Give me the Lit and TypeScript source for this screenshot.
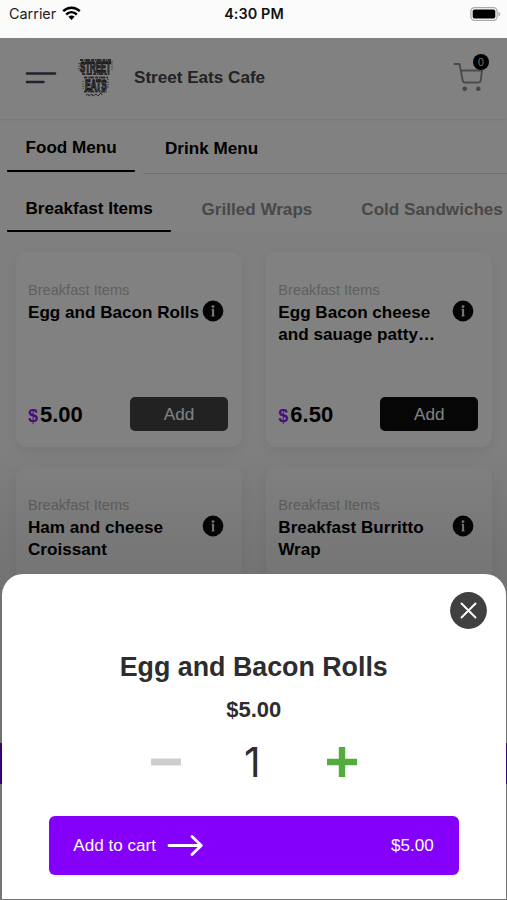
import { LitElement, html, css } from "lit";
import { customElement, property } from "lit/decorators.js";

interface MenuItem {
  title: string;
  price: string;
  active?: boolean;
}

const ITEMS: MenuItem[] = [
  { title: "Egg and Bacon Rolls", price: "5.00", active: true },
  { title: "Egg Bacon cheese and sauage patty…", price: "6.50" },
  { title: "Ham and cheese Croissant", price: "7.00" },
  { title: "Breakfast Burritto Wrap", price: "8.00" },
];

@customElement("menu-card")
export class MenuCard extends LitElement {
  @property({ attribute: false }) item!: MenuItem;

  static styles = css`
    :host {
      display: flex;
      flex-direction: column;
      box-sizing: border-box;
      height: 195px;
      padding: 28px 14px 16px 12px;
      border-radius: 10px;
      background: #fff;
      box-shadow: 0 4px 14px rgba(0, 0, 0, 0.07);
    }
    .category {
      font-size: 14.6px;
      line-height: 20px;
      color: #bdbdbd;
    }
    .row {
      display: flex;
      justify-content: space-between;
      padding-right: 4px;
    }
    .title {
      width: 173px;
      margin-right: -2px;
      font-size: 17.1px;
      line-height: 22px;
      font-weight: 700;
      flex: none;
      padding-top: 2px;
    }
    .info {
      flex: none;
      width: 22px;
      height: 22px;
    }
    .foot {
      display: flex;
      align-items: center;
      justify-content: space-between;
      margin-top: auto;
    }
    .price {
      font-size: 22px;
      font-weight: 700;
      line-height: 30px;
      padding-top: 2px;
    }
    .currency {
      font-size: 18px;
      color: #8a1cf0;
      margin-right: 2px;
    }
    .add {
      width: 98px;
      height: 34px;
      border-radius: 5px;
      background: #0c0c0c;
      color: #fff;
      font-size: 17.1px;
      line-height: 35px;
      text-align: center;
    }
    .add.active {
      background: #434343;
    }
  `;

  render() {
    const { title, price, active } = this.item;
    return html`
      <div class="category">Breakfast Items</div>
      <div class="row">
        <div class="title">${title}</div>
        <svg class="info" viewBox="0 0 22 22">
          <circle cx="11" cy="11" r="10.4" fill="#0a0a0a" />
          <circle cx="11" cy="6.6" r="1.4" fill="#eee" />
          <path d="M9.6 9.5H11v6M9.6 15.8h2.9" fill="none" stroke="#ddd" stroke-width="1.3" />
          <path d="M11.1 9v7" stroke="#eee" stroke-width="2" />
        </svg>
      </div>
      <div class="foot">
        <div class="price"><span class="currency">$</span>${price}</div>
        <div class="add ${active ? "active" : ""}">Add</div>
      </div>
    `;
  }
}

@customElement("app-root")
export class AppRoot extends LitElement {
  static styles = css`
    :host {
      display: block;
      position: relative;
      width: 507px;
      height: 900px;
      overflow: hidden;
      background: #fff;
      color: #000;
      font-family: "Liberation Sans", Arial, sans-serif;
      white-space: normal;
    }
    .status {
      display: grid;
      grid-template-columns: 1fr auto 1fr;
      align-items: center;
      box-sizing: border-box;
      height: 38px;
      padding: 0 6px 11px 9px;
      background: #fbfbfb;
      font-family: Inter, sans-serif;
      font-size: 14.4px;
      color: #222;
    }
    .carrier {
      display: flex;
      align-items: center;
      gap: 6px;
    }
    .clock {
      font-weight: 600;
      color: #111;
      letter-spacing: 0.1px;
      margin-right: 2px;
    }
    .battery {
      justify-self: end;
    }
    svg {
      display: block;
    }
    .page {
      position: relative;
      height: 862px;
      overflow: hidden;
    }
    .header {
      display: flex;
      align-items: center;
      box-sizing: border-box;
      height: 81px;
      padding: 0 22px 2px 24.5px;
      box-shadow: 0 1px 2px rgba(0, 0, 0, 0.07);
    }
    .logo {
      margin-left: 20px;
      overflow: visible;
    }
    .name {
      flex: 1;
      margin-left: 20.5px;
      font-size: 17.1px;
      font-weight: 700;
      color: #444;
    }
    .cart {
      position: relative;
      margin-bottom: 3px;
    }
    .badge {
      position: absolute;
      top: -6px;
      right: -4px;
      width: 16px;
      height: 16px;
      border-radius: 50%;
      background: #000;
      color: #ddd;
      font-size: 10.5px;
      line-height: 17px;
      text-align: center;
    }
    .tabs {
      display: flex;
      box-sizing: border-box;
      padding-left: 7px;
      font-size: 17.1px;
      font-weight: 700;
      white-space: nowrap;
    }
    .menus {
      height: 54px;
    }
    .tab {
      box-sizing: border-box;
      height: 53px;
      line-height: 57px;
      border-bottom: 2px solid #000;
      border-radius: 1px;
    }
    .food {
      width: 128px;
      padding-left: 18.5px;
    }
    .drink {
      flex: 1;
      height: 54px;
      margin-left: 8px;
      padding-left: 22px;
      line-height: 59px;
      border-bottom: 1px solid #dcdcdc;
    }
    .breakfast {
      width: 164px;
      height: 59px;
      line-height: 71px;
      padding-left: 18.5px;
    }
    .categories {
      height: 59px;
    }
    .idle {
      line-height: 73px;
      color: #8e8e8e;
      margin-left: 30.5px;
    }
    .idle + .idle {
      margin-left: 49px;
    }
    .list {
      display: grid;
      grid-template-columns: 226px 226px;
      gap: 20px 24.3px;
      box-sizing: border-box;
      height: 511px;
      padding: 20px 16px;
      align-content: start;
      background: #fbfbfb;
    }
    .bar {
      height: 41px;
      background: #8000ff;
    }
    .scrim {
      position: absolute;
      inset: 0;
      background: linear-gradient(rgba(0, 0, 0, 0.495) 0 410px, rgba(0, 0, 0, 0.54) 535px);
    }
    .sheet {
      position: absolute;
      left: 2px;
      right: 1.5px;
      top: 573.5px;
      bottom: 1.5px;
      display: flex;
      flex-direction: column;
      align-items: center;
      border-radius: 21px 21px 0 0;
      background: #fff;
      color: #2d2d2f;
    }
    .close {
      align-self: flex-end;
      margin: 18.5px 18.5px 0 0;
    }
    .dish {
      margin-top: 20px;
      font-size: 26.8px;
      line-height: 36px;
      font-weight: 700;
    }
    .unit {
      margin-top: 11px;
      font-size: 22px;
      line-height: 28px;
      font-weight: 700;
    }
    .stepper {
      display: flex;
      align-items: center;
      justify-content: space-between;
      width: 206px;
      height: 60px;
      margin-top: 8px;
    }
    .count {
      font-family: Inter, "Liberation Sans", sans-serif;
      font-size: 41px;
      line-height: 60px;
      margin-right: 3px;
    }
    .submit {
      display: flex;
      align-items: center;
      box-sizing: border-box;
      width: 410px;
      height: 59px;
      margin-top: 24px;
      padding: 0 25px 0 24.5px;
      border-radius: 6px;
      background: #8400fa;
      color: #fff;
      font-size: 17.1px;
    }
    .arrow {
      margin-left: 11px;
    }
    .total {
      margin-left: auto;
    }
  `;

  render() {
    return html`
      <div class="status">
        <div class="carrier">
          Carrier
          <svg width="19" height="15" viewBox="0 0 19 15" fill="none" stroke="#000" stroke-width="2.5">
            <path d="M1.2 5.2C6 .6 13 .6 17.8 5.2M4.2 8.5c3.1-2.9 7.5-2.9 10.6 0" />
            <path d="M9.5 13.9 6.4 10.8c1.8-1.6 4.4-1.6 6.2 0z" fill="#000" stroke="none" />
          </svg>
        </div>
        <div class="clock">4:30 PM</div>
        <svg class="battery" width="31" height="14" viewBox="0 0 31 14">
          <rect x=".9" y=".7" width="26.2" height="12.6" rx="3.6" fill="#fbfbfb" stroke="#aaa" stroke-width="1.2" />
          <rect x="2.7" y="2.5" width="22.6" height="9" rx="1.8" fill="#000" />
          <path d="M28.5 4.7c2.2.8 2.2 3.8 0 4.6z" fill="#aaa" />
        </svg>
      </div>
      <div class="page">
        <div class="header">
          <svg width="32" height="14" viewBox="0 0 32 14" stroke="#3e4256" stroke-width="2.6" stroke-linecap="round">
            <path d="M2 2.5h28M2 11h16.5" />
          </svg>
          <svg class="logo" width="37" height="44" viewBox="-1 -1 37 44" font-family="Liberation Sans" font-weight="700" fill="#bbb" stroke="#333" stroke-width="1.3">
            <path d="M2 3h31M4 17h28M6 20.5h24M6 34.5h23" stroke="#555" stroke-width="2" stroke-dasharray="3 .7 1 .5 5 1" />
            <text transform="translate(2 15) scale(.54 1)" font-size="14.5">STREET</text>
            <text transform="translate(7 32.5) scale(.56 1)" font-size="15">EATS</text>
            <path d="M1 6v8M34 4v9M5 24v8M30 22v10" stroke="#666" stroke-dasharray="1 1.5" />
            <path d="M8 38.5l2-1.5 1 2 3-2 1 2 3-2 2 2 3-3 1 2" fill="none" stroke="#555" stroke-width="1" />
          </svg>
          <div class="name">Street Eats Cafe</div>
          <div class="cart">
            <svg width="32" height="32" viewBox="0 0 32 32" fill="none" stroke="#939393" stroke-width="1.9" stroke-linejoin="round" stroke-linecap="round">
              <path d="M1.5 4h5l3.2 16.5q.4 2 2 2h14q1.6 0 1.9-1.7L29 10.5H8" />
              <circle cx="11.8" cy="28.7" r="2.3" fill="#888" stroke="none" />
              <circle cx="25.3" cy="28.7" r="2.3" fill="#888" stroke="none" />
            </svg>
            <div class="badge">0</div>
          </div>
        </div>
        <div class="tabs menus">
          <div class="tab food">Food Menu</div>
          <div class="drink">Drink Menu</div>
        </div>
        <div class="tabs categories">
          <div class="tab breakfast">Breakfast Items</div>
          <div class="idle">Grilled Wraps</div>
          <div class="idle">Cold Sandwiches</div>
        </div>
        <div class="list">${ITEMS.map((item) => html`<menu-card .item=${item}></menu-card>`)}</div>
        <div class="bar"></div>
        <div class="scrim"></div>
      </div>
      <div class="sheet">
        <svg class="close" width="37" height="37" viewBox="0 0 37 37">
          <circle cx="18.5" cy="18.5" r="18.4" fill="#404040" />
          <path d="M11.5 11.5l14 14M25.5 11.5l-14 14" stroke="#fff" stroke-width="1.9" stroke-linecap="round" />
        </svg>
        <div class="dish">Egg and Bacon Rolls</div>
        <div class="unit">$5.00</div>
        <div class="stepper">
          <svg width="30" height="30" viewBox="0 0 30 30"><path d="M0 15h30" stroke="#cdcdcf" stroke-width="7" /></svg>
          <div class="count">1</div>
          <svg width="30" height="30" viewBox="0 0 30 30"><path d="M0 15h30M15 0v30" stroke="#53ac3b" stroke-width="6.4" /></svg>
        </div>
        <div class="submit">
          Add to cart
          <svg class="arrow" width="36" height="22" viewBox="0 0 36 22" fill="none" stroke="#fff" stroke-width="2.8" stroke-linecap="round" stroke-linejoin="round">
            <path d="M2 10.5h32M25 1.5l9.3 9L25 19.5" />
          </svg>
          <span class="total">$5.00</span>
        </div>
      </div>
    `;
  }
}
